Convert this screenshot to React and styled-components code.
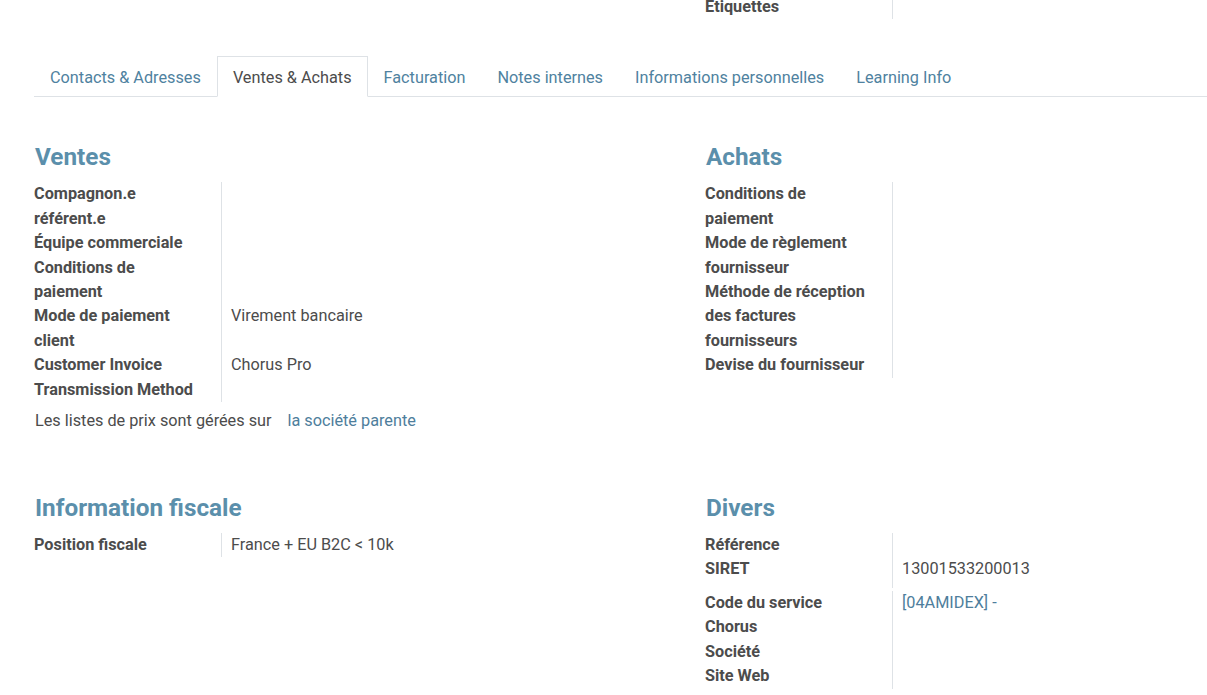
import React from 'react';
import styled, { createGlobalStyle } from 'styled-components';

const GlobalStyle = createGlobalStyle`
  html, body {
    margin: 0;
    padding: 0;
    background: #ffffff;
    overflow: hidden;
  }
  body {
    font-family: Roboto, "Liberation Sans", sans-serif;
    font-size: 16.25px;
    color: #4c4c4c;
  }
`;

const Sheet = styled.div`
  width: 1342px;
  padding-left: 34px;
`;

const TopRow = styled.div`
  display: grid;
  grid-template-columns: 671px 671px;
`;

const Notebook = styled.ul`
  display: flex;
  list-style: none;
  margin: 37px 0 0 0;
  padding: 0;
  border-bottom: 1px solid #dee2e6;
  width: 1173px;
`;

const Tab = styled.li`
  padding: 9px 15px 6px;
  line-height: 24px;
  margin-bottom: -1px;
  border: 1px solid ${p => (p.$active ? '#dee2e6' : 'transparent')};
  border-bottom-color: ${p => (p.$active ? '#ffffff' : 'transparent')};
  color: ${p => (p.$active ? '#4c4c4c' : '#4f82a0')};
  background: ${p => (p.$active ? '#ffffff' : 'transparent')};
  cursor: pointer;
`;

const Groups = styled.div`
  display: grid;
  grid-template-columns: 671px 671px;
  padding-top: ${p => p.$top || 0}px;
`;

const Group = styled.div`
  display: flex;
  flex-direction: column;
`;

const Heading = styled.h2`
  margin: 1px 0 13px 1px;
  font-size: 24.3px;
  line-height: 24px;
  font-weight: 700;
  color: #5b8fab;
`;

const Row = styled.div`
  display: grid;
  grid-template-columns: 188px 1fr;
  margin-top: ${p => p.$gap || 0}px;
`;

const Label = styled.div`
  font-weight: 700;
  line-height: 24.4px;
  border-right: 1px solid #dee2e6;
  padding-bottom: ${p => p.$pad || 0}px;
  padding-right: 21px;
`;

const Value = styled.div`
  line-height: 24.4px;
  padding-left: 9px;
  color: ${p => (p.$link ? '#4e7e9c' : '#4c4c4c')};
`;

const Note = styled.div`
  display: flex;
  gap: 16px;
  margin: 7px 0 0 1px;
  line-height: 24px;
`;

const Link = styled.a`
  color: #4e7e9c;
  text-decoration: none;
`;

const Field = ({ label, value, link, pad, gap }) => (
  <Row $gap={gap}>
    <Label $pad={pad}>{label}</Label>
    <Value $link={link}>{value}</Value>
  </Row>
);

const tabs = [
  'Contacts & Adresses',
  'Ventes & Achats',
  'Facturation',
  'Notes internes',
  'Informations personnelles',
  'Learning Info',
];

const App = () => (
  <Sheet>
    <GlobalStyle />
    <TopRow>
      <div />
      <Row style={{ marginTop: -5 }}>
        <Label>Etiquettes</Label>
        <Value />
      </Row>
    </TopRow>
    <Notebook>
      {tabs.map(t => (
        <Tab key={t} $active={t === 'Ventes & Achats'}>{t}</Tab>
      ))}
    </Notebook>
    <Groups $top={47}>
      <Group>
        <Heading>Ventes</Heading>
        <Field label="Compagnon.e référent.e" />
        <Field label="Équipe commerciale" />
        <Field label="Conditions de paiement" />
        <Field label="Mode de paiement client" value="Virement bancaire" />
        <Field label="Customer Invoice Transmission Method" value="Chorus Pro" />
        <Note>
          <span>Les listes de prix sont gérées sur</span>
          <Link href="#">la société parente</Link>
        </Note>
      </Group>
      <Group>
        <Heading>Achats</Heading>
        <Field label="Conditions de paiement" />
        <Field label="Mode de règlement fournisseur" />
        <Field label="Méthode de réception des factures fournisseurs" />
        <Field label="Devise du fournisseur" />
      </Group>
    </Groups>
    <Groups $top={62}>
      <Group>
        <Heading>Information fiscale</Heading>
        <Field label="Position fiscale" value="France + EU B2C < 10k" />
      </Group>
      <Group>
        <Heading>Divers</Heading>
        <Field label="Référence" />
        <Field label="SIRET" value="13001533200013" pad={6} />
        <Field label="Code du service Chorus" value="[04AMIDEX] -" link gap={3} />
        <Field label="Société" />
        <Field label="Site Web" />
      </Group>
    </Groups>
  </Sheet>
);

export default App;
